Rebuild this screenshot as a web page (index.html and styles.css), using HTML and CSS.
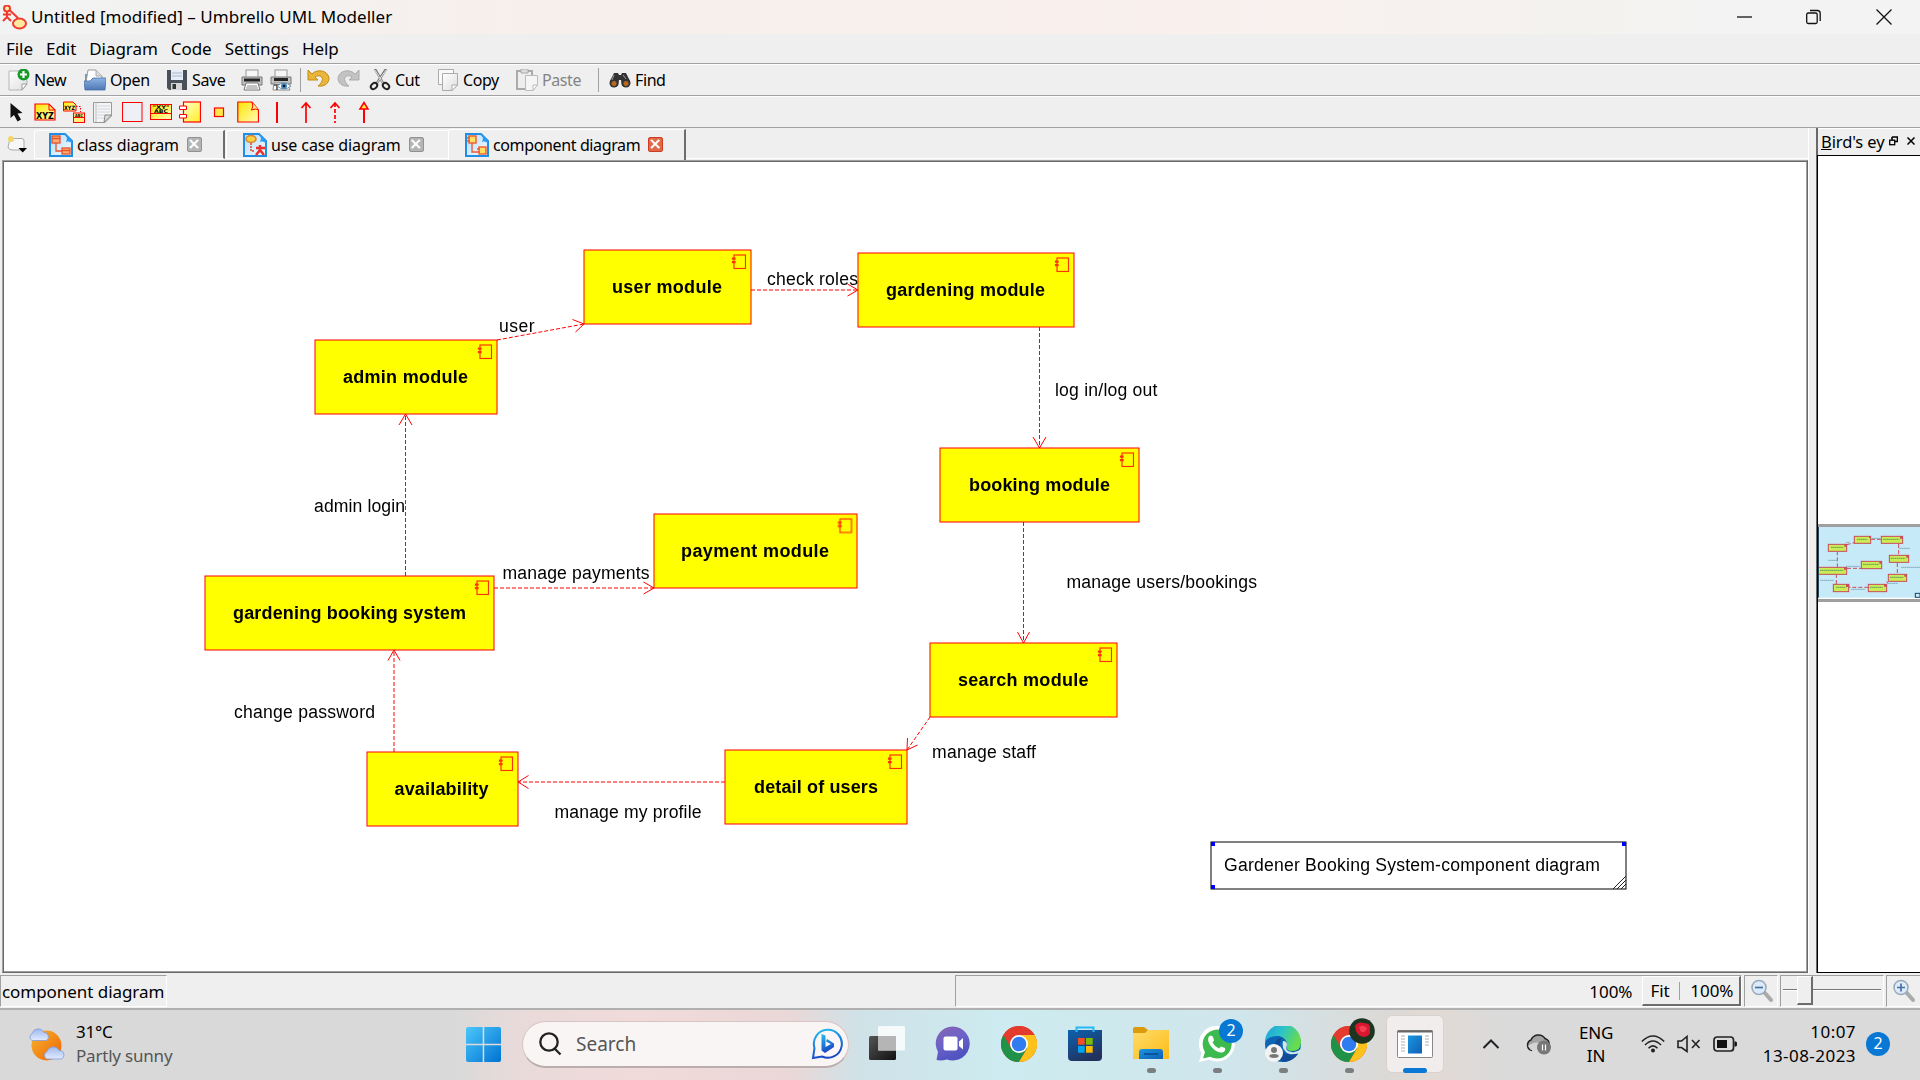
FILE: index.html
```html
<!DOCTYPE html>
<html lang="en">
<head>
<meta charset="utf-8">
<title>Untitled [modified] – Umbrello UML Modeller</title>
<link rel="stylesheet" href="styles.css">
</head>
<body>
<svg class="defs" width="0" height="0">
  <defs>
    <linearGradient id="gy" x1="0" y1="0" x2="1" y2="1"><stop offset="0" stop-color="#ffffd0"/><stop offset="1" stop-color="#ffee20"/></linearGradient>
    <linearGradient id="gyr" x1="0" y1="0" x2="1" y2="1"><stop offset="0" stop-color="#ffe600"/><stop offset="1" stop-color="#fffbb8"/></linearGradient>
    <linearGradient id="gwin" x1="0" y1="0" x2="1" y2="1"><stop offset="0" stop-color="#4cc8fb"/><stop offset="1" stop-color="#0072d2"/></linearGradient>
    <linearGradient id="gsun" x1="0" y1="0" x2="1" y2="1"><stop offset="0" stop-color="#f6b52c"/><stop offset="1" stop-color="#ef6206"/></linearGradient>
    <linearGradient id="gcloud" x1="0" y1="0" x2="0" y2="1"><stop offset="0" stop-color="#9fb8ec"/><stop offset="1" stop-color="#e2ebff"/></linearGradient>
    <linearGradient id="gbing" x1="0" y1="0" x2="0.3" y2="1"><stop offset="0" stop-color="#26c3f0"/><stop offset="1" stop-color="#1747c6"/></linearGradient>
    <linearGradient id="gchat" x1="0" y1="0" x2="0.5" y2="1"><stop offset="0" stop-color="#8a63b0"/><stop offset="0.5" stop-color="#6c63c8"/><stop offset="1" stop-color="#4f52c0"/></linearGradient>
    <linearGradient id="gdark" x1="0" y1="0" x2="1" y2="1"><stop offset="0" stop-color="#555"/><stop offset="1" stop-color="#111"/></linearGradient>
    <linearGradient id="gstore" x1="0" y1="0" x2="0.5" y2="1"><stop offset="0" stop-color="#0c62b0"/><stop offset="1" stop-color="#22325e"/></linearGradient>
    <linearGradient id="gfold" x1="0" y1="0" x2="1" y2="1"><stop offset="0" stop-color="#ffdc6c"/><stop offset="1" stop-color="#fdbb16"/></linearGradient>
    <linearGradient id="gblue" x1="0" y1="0" x2="1" y2="1"><stop offset="0" stop-color="#1a97e0"/><stop offset="1" stop-color="#0f5fb4"/></linearGradient>
    <linearGradient id="gedge" x1="0" y1="0" x2="1" y2="0.4"><stop offset="0" stop-color="#1f9fe0"/><stop offset="0.5" stop-color="#2cc3c9"/><stop offset="1" stop-color="#68dc4c"/></linearGradient>
    <linearGradient id="gopen" x1="0" y1="0" x2="0" y2="1"><stop offset="0" stop-color="#8db4e4"/><stop offset="1" stop-color="#4c78b4"/></linearGradient>
    <linearGradient id="gpap" x1="0" y1="0" x2="1" y2="1"><stop offset="0" stop-color="#fff"/><stop offset="1" stop-color="#dedede"/></linearGradient>
    <linearGradient id="gtab" x1="0" y1="0" x2="1" y2="1"><stop offset="0" stop-color="#b4dcf8"/><stop offset="1" stop-color="#f4fbff"/></linearGradient>
    <symbol id="page" viewBox="0 0 24 24"><path d="M1 1H16L23 8V23H1Z" fill="url(#gtab)" stroke="#1e8ee6" stroke-width="2"/><path d="M15 1C19 4 18 6 17 9C20 8 22 9 23 11V7L17 1Z" fill="#2c9cf0"/></symbol>
    <symbol id="comp" viewBox="0 0 16 16"><rect x="3.500" y="1.500" width="11.500" height="13.500"/><path d="M2 4.500h2.500v1.200H2zM2 8h2.500v1.200H2z"/></symbol>
    <symbol id="chrome" viewBox="0 0 36 36"><circle cx="18" cy="18" r="18" fill="#e33b2e"/><path d="M2.4 9A18 18 0 0 0 18 36L26 22.500L18 18Z" fill="#1f9247"/><path d="M18 9H33.600A18 18 0 0 1 18 36L26 22.500Z" fill="#fcc21b"/><path d="M2.400 9L10.200 22.500L18 18V9H33.600A18 18 0 0 0 2.400 9Z" fill="#e33b2e"/><circle cx="18" cy="18" r="9" fill="#fff"/><circle cx="18" cy="18" r="7.300" fill="#2f7cf0"/></symbol>
  </defs>
</svg>

<header class="titlebar">
  <svg class="app-icon" width="26" height="26" viewBox="0 0 26 26" fill="none" stroke="#f03a2e" stroke-width="2"><circle cx="6" cy="3.500" r="3" fill="#fff3a8"/><path d="M6 7V12L2 16M6 12L10 16M2 9.500H10M9 5.500L17 13"/><ellipse cx="18.500" cy="18.500" rx="6.500" ry="5" fill="#ffe9a0"/></svg>
  <span class="title">Untitled [modified] – Umbrello UML Modeller</span>
  <svg class="win-controls" width="150" height="16" viewBox="0 0 150 16" fill="none" stroke="#111" stroke-width="1.300"><path d="M0 8H15"/><rect x="69.700" y="4" width="10.500" height="10.500" rx="1.500"/><path d="M73 1.500H80.500Q83.200 1.500 83.200 4.500V12"/></svg>
  <svg class="win-close" width="16" height="16" viewBox="0 0 16 16" stroke="#111" stroke-width="1.300"><path d="M.5 .5L15.500 15.500M15.500 .5L.5 15.500"/></svg>
</header>

<nav class="menubar"><span>File</span><span>Edit</span><span>Diagram</span><span>Code</span><span>Settings</span><span>Help</span></nav>

<div class="toolbar main-tools">
  <div class="tool"><svg width="22" height="22" viewBox="0 0 22 22"><path d="M1 2H19V15L14 21H1Z" fill="url(#gpap)" stroke="#b5b5b5"/><path d="M19 15H14V21Z" fill="#fff" stroke="#999"/><circle cx="15.500" cy="5.500" r="6" fill="#169a28"/><path d="M15.500 2V9M12 5.500H19" stroke="#fff" stroke-width="2.200"/></svg>New</div>
  <div class="tool"><svg width="22" height="22" viewBox="0 0 22 22"><path d="M1 5H7V12H1Z" fill="#6a96cc"/><path d="M4 1H12L18 7V13H2Z" fill="#fff" stroke="#999"/><path d="M12 1V7H18" fill="#ddd" stroke="#aaa"/><path d="M0 12H6L9 9H22L21 21H1Z" fill="url(#gopen)" stroke="#4670a8" stroke-width=".8"/></svg>Open</div>
  <div class="tool"><svg width="22" height="22" viewBox="0 0 22 22"><path d="M1 1H21V21H3L1 19Z" fill="#4a5058"/><rect x="5" y="1" width="12" height="10" fill="#e6edf6"/><path d="M6 4H16M6 7H16" stroke="#a8b8cc"/><rect x="5" y="14" width="11" height="7" fill="#d5d5d5"/><rect x="6.500" y="15" width="3.500" height="5" fill="#333"/></svg>Save</div>
  <div class="tool"><svg width="22" height="22" viewBox="0 0 22 22"><rect x="5" y="1" width="12" height="9" fill="#f6f6f6" stroke="#999"/><path d="M1 8H21V16H1Z" fill="#c2c2c2" stroke="#777"/><path d="M3 11H19" stroke="#222" stroke-width="3"/><path d="M5 14H17L19 21H3Z" fill="#fff" stroke="#777"/><path d="M6 17H16M5 19H17" stroke="#888"/></svg></div>
  <div class="tool"><svg width="22" height="22" viewBox="0 0 22 22"><rect x="5" y="1" width="12" height="9" fill="#f6f6f6" stroke="#999"/><path d="M1 8H21V15H1Z" fill="#c2c2c2" stroke="#777"/><path d="M4 10.500H18" stroke="#222" stroke-width="3"/><path d="M4 14H17L20 21H3Z" fill="#fff" stroke="#888"/><path d="M4 16H10M7 16V21" stroke="#444" stroke-width="1.500"/><path d="M7 17Q14 11 21 17Q14 23 7 17Z" fill="#fff" stroke="#7590a8"/><circle cx="14" cy="17" r="3" fill="#3f88c0"/><circle cx="14" cy="17" r="1.300" fill="#112"/></svg></div>
  <i class="sep"></i>
  <div class="tool"><svg width="24" height="22" viewBox="0 0 24 22"><path d="M1 1V11H11L8 8C12 5 17 8 15 12C14 14 13 16 11 17C18 18 22 14 22 9C21 2 11 -1 5 5Z" fill="#e9b53a" stroke="#c48b12"/></svg></div>
  <div class="tool"><svg width="24" height="22" viewBox="0 0 24 22"><path d="M22 1V11H12L15 8C11 5 6 8 8 12C9 14 10 16 12 17C5 18 1 14 1 9C2 2 12 -1 18 5Z" fill="#c3c3c3" stroke="#ababab"/></svg></div>
  <div class="tool"><svg width="22" height="22" viewBox="0 0 22 22" fill="none"><path d="M6 0L14 14M17 0L8 14" stroke="#777" stroke-width="2.400"/><path d="M6 1L14 14M17 1L8 14" stroke="#eee" stroke-width=".9"/><ellipse cx="5" cy="17" rx="3.500" ry="2.600" transform="rotate(-40 5 17)" stroke="#222" stroke-width="2"/><ellipse cx="17" cy="17" rx="3.500" ry="2.600" transform="rotate(40 17 17)" stroke="#222" stroke-width="2"/></svg>Cut</div>
  <div class="tool"><svg width="22" height="22" viewBox="0 0 22 22"><path d="M1.500 .5H16.500V15.500H1.500Z" fill="#fafafa" stroke="#aaa"/><path d="M5.500 4.500H20.500V16L15 21.500H5.500Z" fill="url(#gpap)" stroke="#aaa"/><path d="M20.500 16H15V21.500Z" fill="#fff" stroke="#aaa"/></svg>Copy</div>
  <div class="tool off"><svg width="22" height="22" viewBox="0 0 22 22"><path d="M1 2H16V20H1Z" fill="#eee" stroke="#aaa" stroke-width="2"/><path d="M5 0H12V4H5Z" fill="#ddd" stroke="#aaa"/><path d="M9.500 6.500H21.500V16L17 21.500H9.500Z" fill="#f5f5f5" stroke="#bbb"/><path d="M21.500 16H17V21.500Z" fill="#fff" stroke="#bbb"/></svg>Paste</div>
  <i class="sep"></i>
  <div class="tool"><svg width="22" height="22" viewBox="0 0 22 22"><path d="M1 12L5 4H9L10 6H12L13 4H17L21 12L19 17H13L12 11H10L9 17H2Z" fill="#333"/><circle cx="5" cy="14" r="4.500" fill="#333"/><circle cx="17" cy="14" r="4.500" fill="#333"/><circle cx="5" cy="14.500" r="2.500" fill="#b8691e"/><circle cx="17" cy="14.500" r="2.500" fill="#b8691e"/><path d="M5 6L3 11M14 6L17 10" stroke="#999"/></svg>Find</div>
</div>

<div class="toolbar uml-tools">
  <svg viewBox="0 0 22 22"><path d="M5.500 2V17L9 14L12.500 20.500L16 18.500L12.500 12.500L17.500 12Z" fill="#111"/></svg>
  <svg viewBox="0 0 22 22"><path d="M1 3H15L21 9V19H1Z" fill="url(#gyr)" stroke="#f00" stroke-width="1.200"/><path d="M15 3V9H21" fill="none" stroke="#f00"/><text x="11" y="17.500" class="mini" font-size="9" textLength="18" lengthAdjust="spacingAndGlyphs">XYZ</text></svg>
  <svg viewBox="0 0 22 22"><path d="M.5 1H10L13 4V10H.5Z" fill="url(#gyr)" stroke="#f00"/><text x="6.500" y="8.500" class="mini" font-size="6" textLength="11" lengthAdjust="spacingAndGlyphs">XYZ</text><path d="M13 5.500H17.500V11" fill="none" stroke="#f00" stroke-dasharray="1.500 1.500"/><rect x="10.500" y="12" width="11" height="9.500" fill="#ffef80" stroke="#f00"/><path d="M10.500 16.500H21.500" stroke="#f00"/><text x="16" y="15.800" class="mini" font-size="4" textLength="8" lengthAdjust="spacingAndGlyphs">ABC</text></svg>
  <svg viewBox="0 0 22 22"><path d="M1.500 1.500H19.500V15L13 21.500H1.500Z" fill="#f5f5f5" stroke="#999"/><path d="M4 1V21" stroke="#bbb"/><path d="M5 5H18M5 8H18M5 11H18M5 14H15M5 17H12" stroke="#cfd8e4"/><path d="M19.500 14L12 21.500L13 14Z" fill="#ddd" stroke="#888"/></svg>
  <svg viewBox="0 0 22 22"><rect x="1.500" y="1.500" width="19.500" height="19" fill="#eff0f6" stroke="#f00"/></svg>
  <svg viewBox="0 0 22 22"><rect x=".5" y="3.500" width="21" height="15" fill="url(#gyr)" stroke="#f00"/><path d="M.5 12.500H21.500" stroke="#f00"/><text x="11" y="7.500" class="mini" font-size="5" textLength="17" lengthAdjust="spacingAndGlyphs">"XY"</text><text x="11" y="11.500" class="mini" font-size="5" textLength="14" lengthAdjust="spacingAndGlyphs">ABC</text></svg>
  <svg viewBox="0 0 22 22"><rect x="4.500" y="1" width="17" height="20" fill="url(#gy)" stroke="#f00" stroke-width="1.200"/><path d="M.5 5H7.500V8.500H.5ZM.5 13.500H7.500V17H.5Z" fill="#fff" stroke="#f00"/></svg>
  <svg viewBox="0 0 22 22"><rect x="6.500" y="7" width="9" height="8.500" fill="#ffe94a" stroke="#f00" stroke-width="1.200"/></svg>
  <svg viewBox="0 0 22 22"><path d="M.8 1H15L21.500 9V21H.8Z" fill="url(#gyr)" stroke="#f00" stroke-width="1.200"/><path d="M15 1Q17 5 14.500 9Q19 7 21.500 9" fill="#fff17a" stroke="#f00"/></svg>
  <svg viewBox="0 0 22 22"><path d="M11 1V22" stroke="#f00" stroke-width="2"/></svg>
  <svg viewBox="0 0 22 22" fill="none" stroke="#f00" stroke-width="1.700"><path d="M11 2V22M6.500 7L11 2L15.500 7"/></svg>
  <svg viewBox="0 0 22 22" fill="none" stroke="#f00" stroke-width="1.700"><path d="M6.500 7L11 2L15.500 7"/><path d="M11 2V22" stroke-dasharray="4 2"/></svg>
  <svg viewBox="0 0 22 22" stroke="#f00" stroke-width="1.500"><path d="M11 8V22" stroke-width="2"/><path d="M7 8L11 1.500L15 8Z" fill="#ffef40"/></svg>
</div>

<main class="workspace">
  <section class="diagrams">
    <div class="tabs">
      <svg class="new-tab" width="22" height="22" viewBox="0 0 22 22"><path d="M3 3.500H15Q17 3.500 17 6V15H5Q2 15 1 12Z" fill="#f7f7f7" stroke="#aaa"/><circle cx="4" cy="4" r="3" fill="#f2d668"/><path d="M11.500 13H20L15.700 17.500Z" fill="#000"/></svg>
      <div class="tab"><svg width="24" height="24" viewBox="0 0 24 24"><use href="#page"/><g fill="#ffb070" stroke="#e8502c" stroke-width="1.300"><rect x="3" y="3" width="8" height="7"/><rect x="13" y="15" width="8" height="6"/><path d="M7 10V18H13M3 5.500H11M13 17.500H21" fill="none"/></g></svg><span>class diagram</span><b class="x">×</b></div>
      <div class="tab"><svg width="24" height="24" viewBox="0 0 24 24"><use href="#page"/><ellipse cx="8" cy="6" rx="5" ry="3.500" fill="#f8d040" stroke="#d8802c" stroke-width="1.500"/><path d="M8 10V18H12" fill="none" stroke="#e84030" stroke-width="1.500" stroke-dasharray="2 1"/><path d="M17 12V17L13 22M17 17L21 22M13 15H22" stroke="#e8302c" stroke-width="2.500" fill="none"/></svg><span>use case diagram</span><b class="x">×</b></div>
      <div class="tab current"><svg width="24" height="24" viewBox="0 0 24 24"><use href="#page"/><g fill="#ffe060" stroke="#ee5a34" stroke-width="1.400"><rect x="4" y="3" width="7" height="7"/><rect x="14" y="14" width="7" height="7"/><path d="M7 10V19H12M2 5H5M2 8H5M12 16H15M12 19H15" fill="none"/></g></svg><span>component diagram</span><b class="x red">×</b></div>
      <div class="tabs-rest"></div>
    </div>
    <div class="canvas">
      <svg width="1802" height="808" viewBox="4 162 1802 808">
        <g class="boxes">
          <rect x="584" y="250" width="167" height="74"/><rect x="858" y="253" width="216" height="74"/><rect x="315" y="340" width="182" height="74"/><rect x="940" y="448" width="199" height="74"/><rect x="654" y="514" width="203" height="74"/><rect x="205" y="576" width="289" height="74"/><rect x="930" y="643" width="187" height="74"/><rect x="725" y="750" width="182" height="74"/><rect x="367" y="752" width="151" height="74"/>
        </g>
        <g class="glyphs">
          <use href="#comp" x="730.500" y="253.500" width="16" height="16"/><use href="#comp" x="1053.500" y="256.500" width="16" height="16"/><use href="#comp" x="476.500" y="343.500" width="16" height="16"/><use href="#comp" x="1118.500" y="451.500" width="16" height="16"/><use href="#comp" x="836.500" y="517.500" width="16" height="16"/><use href="#comp" x="473.500" y="579.500" width="16" height="16"/><use href="#comp" x="1096.500" y="646.500" width="16" height="16"/><use href="#comp" x="886.500" y="753.500" width="16" height="16"/><use href="#comp" x="497.500" y="755.500" width="16" height="16"/>
        </g>
        <g class="links">
          <path d="M751 290H858M1039.500 327V448M1023.500 522V643M930 717L907 750M725 782H518M394 752V650M405.500 576V414M497 340L584 324M494 588H654"/>
        </g>
        <g class="heads">
          <path d="M847.500 284L858 290L847.500 296M1033 437L1039.500 448L1046 437M1017.500 632L1023.500 643L1029.500 632M907.500 738L907 750L917.500 745M528.500 775.500L518 782L528.500 788.500M388 660.500L394 650L400 660.500M399 425L405.500 414L412 425M572.500 319.500L584 324L575.500 332M643.500 582L654 588L643.500 594"/>
        </g>
        <g class="names">
          <text x="612" y="293" textLength="110">user module</text><text x="886" y="296" textLength="159">gardening module</text><text x="343" y="383" textLength="125">admin module</text><text x="969" y="491" textLength="141">booking module</text><text x="681" y="557" textLength="148">payment module</text><text x="233" y="619" textLength="233">gardening booking system</text><text x="958" y="686" textLength="130.500">search module</text><text x="754" y="793" textLength="124">detail of users</text><text x="394.500" y="795" textLength="94">availability</text>
        </g>
        <g class="labels">
          <text x="499" y="332" textLength="35.500">user</text><text x="767" y="285" textLength="91">check roles</text><text x="1055" y="396" textLength="102.500">log in/log out</text><text x="1066.500" y="588" textLength="190.500">manage users/bookings</text><text x="932" y="758" textLength="104">manage staff</text><text x="314" y="512" textLength="91">admin login</text><text x="502.500" y="579" textLength="147">manage payments</text><text x="234" y="718" textLength="141">change password</text><text x="554.500" y="818" textLength="147">manage my profile</text>
        </g>
        <rect x="1211" y="842" width="415" height="47" fill="#fff" stroke="#000"/>
        <path d="M1613 889L1626 876M1617 889L1626 880M1621 889L1626 884" stroke="#222" fill="none"/>
        <path d="M1211 842h4v4h-4zM1622 842h4v4h-4zM1211 885h4v4h-4z" fill="#00f"/>
        <g class="labels"><text x="1224" y="871" textLength="376">Gardener Booking System-component diagram</text></g>
      </svg>
    </div>
  </section>
  <aside class="dock">
    <div class="dock-head"><span class="dock-title"><u>B</u>ird's eye</span>
      <svg width="9" height="10" viewBox="0 0 9 10" fill="none" stroke="#000"><path d="M3 1H8.500V5.500H6M3 1V4" stroke-width="1.600"/><rect x=".7" y="4.200" width="5" height="4.500" stroke-width="1.300"/></svg>
      <svg width="8" height="8" viewBox="0 0 8 8" stroke="#000" stroke-width="1.500"><path d="M.5 .5L7.500 7.500M7.500 .5L.5 7.500"/></svg>
    </div>
    <div class="overview">
      <svg width="102" height="78" viewBox="114 72 306 234">
        <rect x="114" y="72" width="306" height="234" fill="#9f9f9f"/><rect x="114" y="81" width="306" height="216" fill="#fff"/><rect x="114" y="81" width="306" height="212" fill="#c7eaf9"/>
        <g fill="#c9ee55" stroke="#cb4a5c" stroke-width="3"><rect x="223" y="109" width="49" height="21"/><rect x="304" y="109" width="64" height="21"/><rect x="145" y="133" width="55" height="21"/><rect x="328" y="166" width="58" height="21"/><rect x="244" y="184" width="61" height="22"/><rect x="114" y="202" width="86" height="21"/><rect x="325" y="223" width="55" height="21"/><rect x="265" y="253" width="55" height="22"/><rect x="160" y="253" width="46" height="22"/></g>
        <g fill="none" stroke="#cb4a5c" stroke-width="3" stroke-dasharray="12 6"><path d="M273 118H304M356 132V166M352 189V223M320 244L324 250M265 262H206M169 252V224M172 202V156M200 134L223 128M201 205H244"/></g>
        <path d="M364 109h4v7h-8v-4zM267 109h5v5h-5zM193 133h7v7h-7zM379 166h7v7h-7zM298 184h7v7h-7zM192 202h8v7h-8zM373 223h7v7h-7zM312 253h8v7h-8zM198 253h10v8h-10z" fill="#cb4a5c"/>
        <g stroke="#6a9a5c" stroke-width="3" stroke-dasharray="5 1"><path d="M231 118H262M309 118H358M153 142H190M332 175H376M249 193H296M120 211H190M330 232H370M270 262H308M168 262H196"/></g>
        <g stroke="#83aab8" stroke-width="3" stroke-dasharray="5 1"><path d="M198 127H208M277 115H301M358 145H390M363 202H420M322 250H354M144 181H174M198 199H240M120 241H162M213 268H256"/></g>
        <path d="M115.500 81V293" stroke="#24495c" stroke-width="3"/><rect x="406" y="280" width="14" height="12" fill="#c7eaf9" stroke="#1c4468" stroke-width="3"/>
      </svg>
    </div>
  </aside>
</main>

<footer class="status">
  <div class="cell name">component diagram</div>
  <div class="cell info"><span>100%</span><div class="zoom-btn"><span>Fit</span><i></i><span>100%</span></div></div>
  <div class="cell ico"><svg width="24" height="24" viewBox="0 0 24 24"><path d="M14 13L21 21" stroke="#aaa" stroke-width="4" stroke-linecap="round"/><circle cx="9" cy="8.500" r="7" fill="#dcebfa" stroke="#9aa9ba" stroke-width="1.500"/><path d="M5 8.500H13" stroke="#47719f" stroke-width="1.700"/></svg></div>
  <div class="cell slider"><i class="groove"></i><i class="thumb"></i></div>
  <div class="cell ico last"><svg width="24" height="24" viewBox="0 0 24 24"><path d="M14 13L21 21" stroke="#aaa" stroke-width="4" stroke-linecap="round"/><circle cx="9" cy="8.500" r="7" fill="#dcebfa" stroke="#9aa9ba" stroke-width="1.500"/><path d="M5 8.500H13M9 4.500V12.500" stroke="#47719f" stroke-width="1.700"/></svg></div>
</footer>

<div class="taskbar">
  <div class="weather">
    <svg width="38" height="36" viewBox="0 0 38 36"><circle cx="18.500" cy="18.500" r="15" fill="url(#gsun)"/><path d="M4 13.500A4 4 0 0 1 4 6.500A6.500 6.500 0 0 1 16 5.500A4.200 4.200 0 0 1 18 13.500Z" fill="url(#gcloud)" stroke="#7f9bdc" stroke-width=".8"/><path d="M19 32A4 4 0 0 1 19 24.500A6.500 6.500 0 0 1 31 23.500A4.400 4.400 0 0 1 33 32Z" fill="url(#gcloud)" stroke="#7f9bdc" stroke-width=".8"/></svg>
    <div class="weather-text"><span class="deg">31°C</span><span class="sky">Partly sunny</span></div>
  </div>
  <svg class="start" width="36" height="36" viewBox="0 0 36 36"><path d="M2 0H16.700V16.700H0V2Q0 0 2 0ZM18.200 0H33Q35 0 35 2V16.700H18.200ZM0 18.200H16.700V35H2Q0 35 0 33ZM18.200 18.200H35V33Q35 35 33 35H18.200Z" fill="url(#gwin)"/></svg>
  <div class="search">
    <svg width="24" height="24" viewBox="0 0 24 24" fill="none" stroke="#222" stroke-width="2.300"><circle cx="11" cy="10" r="8.700"/><path d="M16.500 16.500L22.500 22.500"/></svg>
    <span>Search</span>
    <svg class="bing" width="32" height="32" viewBox="0 0 32 32"><path d="M2 30L3.500 20A14 14 0 1 1 11 28.500Z" fill="#fbf7f8" stroke="url(#gbing)" stroke-width="2"/><path d="M10.500 6L14.500 7.500V19L20 16L15 13.500L16 11L23 15.500V19L14 25L10.500 22.500Z" fill="url(#gbing)"/></svg>
  </div>
  <div class="apps">
    <div class="app"><svg viewBox="0 0 36 36"><rect x="0" y="10" width="27" height="24" rx="1.500" fill="url(#gdark)"/><rect x="9" y="0" width="27" height="24.500" rx="1.500" fill="#fff" opacity=".8"/><rect x="9" y="10" width="18" height="14.500" fill="#b5b5b5"/></svg></div>
    <div class="app"><svg viewBox="0 0 36 36"><path d="M1.500 34L3 26A17 17 0 1 1 12 33.500Q6 35 1.500 34Z" fill="url(#gchat)"/><rect x="8.500" y="10.500" width="14" height="14" rx="2" fill="#fff"/><path d="M24 15.500L28 12V23.500L24 20Z" fill="#fff"/></svg></div>
    <div class="app"><svg viewBox="0 0 36 36"><use href="#chrome"/></svg></div>
    <div class="app"><svg viewBox="0 0 36 36"><path d="M1 4H35V31Q35 35 31 35H5Q1 35 1 31Z" fill="url(#gstore)"/><path d="M9.500 6V1.500H26.500V6" fill="none" stroke="#27b9f4" stroke-width="2"/><path d="M11 12h6.700v6.700H11z" fill="#f25022"/><path d="M19 12h6.700v6.700H19z" fill="#7fba00"/><path d="M11 20h6.700v6.700H11z" fill="#00a4ef"/><path d="M19 20h6.700v6.700H19z" fill="#ffb900"/></svg></div>
    <div class="app open"><svg viewBox="0 0 36 36"><path d="M0 3Q0 1 2 1H11L15 4V10H0Z" fill="#dc9b0b"/><path d="M0 7H12L15 4H36V33H0Z" fill="url(#gfold)"/><path d="M6 33V26Q6 23 9 23H27Q30 23 30 26V33Z" fill="url(#gblue)"/><path d="M11 28H25" stroke="#0b498c" stroke-width="1.500"/></svg></div>
    <div class="app open"><svg viewBox="0 0 36 36"><path d="M0 36L2.500 27A18 18 0 1 1 10 33.800Z" fill="#fff"/><path d="M4 32.500L6 26A14.500 14.500 0 1 1 11 30.700Z" fill="#3dba4e"/><path d="M9.500 11Q12 8 14 11L15 14.500L13.500 16.500Q15.500 20.500 20 22.500L22 20.500L26 22Q27 25 23.500 26.500Q18 27 13 21.500Q8 16 9.500 11Z" fill="#fff"/></svg><span class="badge">2</span></div>
    <div class="app open"><svg viewBox="0 0 36 36"><circle cx="18" cy="18" r="18" fill="#0d63b4"/><path d="M0 16A18 18 0 0 1 36 16Q36 25 27 25Q20 25 22 19Q22 12 14 10Q5 9 0 16Z" fill="url(#gedge)"/><path d="M22 19Q19 25 27 26Q31 27 36 23L35 27Q29 30 22 27Q16 22 18 15Q22 15 22 19Z" fill="#d0e6ec"/><path d="M10 20Q10 12 17 12Q13 17 16 24Q20 31 33 27.500Q28 35 19 36Q10 32 10 20Z" fill="#124a96"/><circle cx="9" cy="27" r="9" fill="#f3f3f3"/><circle cx="9" cy="24" r="3" fill="#777"/><path d="M4.500 31V29Q9 27 13.500 29V31Q9 33 4.500 31Z" fill="#777"/></svg></div>
    <div class="app open"><svg viewBox="0 0 36 36"><use href="#chrome"/></svg><svg class="rose" viewBox="0 0 26 26"><circle cx="13" cy="13" r="12.800" fill="#1c3420"/><path d="M6 8Q9 3 15 5Q22 5 21 12Q22 18 15 19Q7 19 6 8Z" fill="#d8182f"/><path d="M10 9Q14 6 18 10Q17 15 12 14Z" fill="#f53c50"/></svg></div>
    <div class="app active"><svg viewBox="0 0 36 36"><rect x=".5" y="4.500" width="35" height="27" rx="1" fill="#fff" stroke="#888"/><path d="M.5 5.500H35.500" stroke="#666" stroke-width="2"/><rect x="11" y="9.500" width="14" height="18" fill="url(#gblue)"/><path d="M4 10H8M4 13H8M4 16H8M4 19H8M4 22H8M4 25H8M28 10H32M28 13H32M28 16H32M28 19H32" stroke="#ccc" stroke-width="1.600"/></svg></div>
  </div>
  <div class="tray">
    <svg width="18" height="10" viewBox="0 0 18 10" fill="none" stroke="#222" stroke-width="2"><path d="M1.500 9L9 1.500L16.500 9"/></svg>
    <svg class="cloud" width="26" height="22" viewBox="0 0 26 22"><path d="M6 17.500A5.500 5.500 0 0 1 5 7A8 8 0 0 1 19 5.500A6 6 0 0 1 23 12" fill="#a4a4a4" stroke="#222" stroke-width="1.500"/><path d="M2 13Q8 8 13 10L18 13L12 17H5Z" fill="#d4d4d4"/><circle cx="18" cy="14.500" r="7" fill="#777"/><path d="M16.500 11.500V17.500M19.500 11.500V17.500" stroke="#fff" stroke-width="1.200"/></svg>
    <div class="lang"><span>ENG</span><span>IN</span></div>
    <svg class="wifi" width="24" height="18" viewBox="0 0 24 18" fill="none" stroke="#222" stroke-width="1.600"><path d="M.8 6.500Q12 -4.500 23.200 6.500M4 10Q12 2 20 10M7.500 13.200Q12 8.500 16.500 13.200"/><circle cx="12" cy="15.500" r="2" fill="#222" stroke="none"/></svg>
    <svg class="vol" width="24" height="18" viewBox="0 0 24 18" fill="none" stroke="#222" stroke-width="1.600"><path d="M1 6H4.500L10 1.500V16.500L4.500 12.500H1ZM15 5L22.500 13M22.500 5L15 13"/></svg>
    <svg class="bat" width="25" height="16" viewBox="0 0 25 16"><rect x="1" y="1" width="19.500" height="14" rx="3" fill="none" stroke="#222" stroke-width="1.700"/><rect x="4" y="4" width="10" height="8" fill="#111"/><path d="M21.500 5.500H23Q24 5.500 24 8T23 10.500H21.500Z" fill="#111"/></svg>
    <div class="clock"><span>10:07</span><span>13-08-2023</span></div>
    <span class="note-badge">2</span>
  </div>
</div>
</body>
</html>
```

FILE: styles.css
```css
* { box-sizing: border-box; }
body { margin: 0; width: 1920px; height: 1080px; overflow: hidden; display: flex; flex-direction: column; background: #efefef; color: #000; font-family: "Noto Sans", "Open Sans", sans-serif; font-size: 16px; }
svg { display: block; flex: none; }
.defs { position: absolute; }
.titlebar { height: 34px; flex: none; display: flex; align-items: center; background: linear-gradient(90deg, #f1f3f3 0, #f7efec 560px, #f9f0ee 1200px, #f3f2ef 1600px, #f3f3f3 1720px); }
.app-icon { margin: 1px 3px 0 1px; }
.title { font-size: 17px; letter-spacing: .05px; line-height: 34px; margin-left: 1px; }
.win-controls { margin-left: auto; margin-right: -11px; }
.win-close { margin-right: 28px; }
.menubar { height: 30px; flex: none; border-bottom: 1px solid #a0a0a0; display: flex; gap: 13px; padding-left: 6px; line-height: 30px; font-size: 17px; letter-spacing: -.05px; }
.toolbar { height: 32px; flex: none; border-top: 1px solid #fff; border-bottom: 1px solid #a0a0a0; }
.main-tools { display: grid; grid-template-columns: 76px 82px 75px 29px 30px 7px 30px 32px 68px 79px 82px 11px auto; padding-left: 8px; align-items: center; }
.tool { display: flex; align-items: center; gap: 4px; font-size: 16px; letter-spacing: -.4px; line-height: 30px; white-space: nowrap; }
.off { color: #858585; }
.sep { width: 1px; height: 24px; background: #a0a0a0; }
.uml-tools { display: flex; align-items: center; gap: 7px; padding-left: 5px; }
.uml-tools svg { width: 22px; height: 22px; }
.mini { font-family: "DejaVu Sans", sans-serif; font-weight: bold; text-anchor: middle; fill: #000; }

.workspace { height: 846px; flex: none; display: flex; }
.diagrams { width: 1810px; display: flex; flex-direction: column; border-right: 1px solid #fff; }
.tabs { height: 32px; display: flex; align-items: flex-end; padding-bottom: 1px; }
.new-tab { margin: 0 5px 2px 7px; }
.tab { height: 29px; display: flex; align-items: center; font-size: 16px; letter-spacing: -.1px; border: 1px solid #fff; border-right: 2px solid #6d6d6d; border-top-left-radius: 3px; width: 191px; padding-left: 14px; white-space: nowrap; }
.tab + .tab { width: 223px; margin-left: 1px; padding-left: 16px; border-right: 0; }
.tab.current { width: 238px; height: 31px; margin-left: -1px; margin-bottom: -1px; padding: 0 0 1px 16px; border-bottom: 0; border-right: 2px solid #6d6d6d; position: relative; letter-spacing: -.37px; }
.tab span { margin-left: 4px; }
.x { margin-left: 8px; width: 15px; height: 15px; border-radius: 2px; border: 1px solid #929292; background: #b4b4b4; color: #fff; font: bold 16px/12px "DejaVu Sans", sans-serif; text-align: center; letter-spacing: 0; text-indent: -1px; }
.red { background: #dd6b4a; border-color: #cf3c22; }
.tabs-rest { flex: 1; height: 29px; border-bottom: 1px solid #fff; }
.canvas { margin-left: 2px; width: 1806px; height: 813px; background: #fff; border: 1px solid #a0a0a0; border-right-color: #696969; border-bottom-color: #696969; box-shadow: inset 1px 1px #696969, inset -1px -1px #a0a0a0; padding: 1px; }
.boxes { fill: #ff0; stroke: #f00; }
.glyphs { fill: none; stroke: #f00; stroke-width: 1.200; opacity: .8; }
.links { fill: none; stroke: #f00; stroke-dasharray: 4 2; }
.heads { fill: none; stroke: #f00; }
.names, .labels { font-family: "Liberation Sans", Arial, sans-serif; font-size: 17.600px; fill: #000; }
.names { font-weight: bold; font-size: 18px; }
.dock { flex: 1; margin-left: 7px; border-left: 2px solid #696969; display: flex; flex-direction: column; height: 845px; }
.dock-head { height: 27px; flex: none; display: flex; align-items: center; padding: 0 6px 0 3px; border-top: 1px solid #fff; }
.dock-title { width: 64px; margin-right: 4px; overflow: hidden; white-space: nowrap; font-size: 16.500px; letter-spacing: -.1px; line-height: 24px; }
.dock-head svg { margin: -2px 9px 0 0; }
.dock-head svg:last-child { margin-right: 0; }
.overview { flex: 1; margin-left: -1px; border: 1px solid #000; background: #fff; padding-top: 368px; }
.overview svg { margin-right: -1px; }

.status { height: 36px; flex: none; display: flex; padding-top: 1px; border-bottom: 2px solid #b0b0b0; font-size: 17px; letter-spacing: -.05px; }
.cell { height: 32px; border: 1px solid #a0a0a0; border-right-color: #fff; border-bottom-color: #fff; display: flex; align-items: center; white-space: nowrap; }
.name { width: 167px; padding-left: 1px; }
.info { margin-left: 788px; width: 790px; justify-content: flex-end; gap: 10px; }
.zoom-btn { width: 99px; height: 30px; border: 1px solid #fff; border-right: 2px solid #6d6d6d; border-bottom: 2px solid #6d6d6d; display: flex; align-items: center; justify-content: space-between; padding: 0 6px 0 7px; }
.zoom-btn i { height: 18px; width: 1px; background: #a0a0a0; }
.ico { width: 34px; margin-left: 2px; padding-left: 5px; }
.slider { width: 104px; margin-left: 2px; position: relative; }
.groove { width: 98px; height: 2px; margin: -3px 0 0 2px; background: #777; border-bottom: 1px solid #fff; }
.thumb { position: absolute; left: 16px; top: 0; width: 16px; height: 29px; background: #efefef; border: 1px solid #fff; border-right: 2px solid #6d6d6d; border-bottom: 2px solid #6d6d6d; }
.last { border-right: 0; }

.taskbar { height: 70px; flex: none; display: flex; align-items: center; background: linear-gradient(90deg, #d9d9d9 0, #d9d9d9 450px, #e9dada 520px, #f1dada 640px, #ead7d7 790px, #cfe2e8 860px, #cdebf0 1000px, #cfe6ec 1240px, #dcd9d6 1390px, #e2dad5 1430px, #dadada 1500px); }
.weather { width: 466px; padding-left: 28px; display: flex; align-items: center; gap: 10px; }
.weather-text { display: flex; flex-direction: column; font-size: 17px; line-height: 24px; letter-spacing: -.2px; margin-top: -3px; }
.sky { color: #555; }
.start { margin-right: 20px; }
.search { width: 327px; height: 47px; margin-top: -1px; border-radius: 24px; background: #faf5f5; border: 1px solid #d9c4c4; border-bottom: 2px solid #bcadad; display: flex; align-items: center; padding: 0 5px 0 15px; font-size: 19px; color: #555; }
.search span { margin-left: 14px; }
.bing { margin-left: auto; }
.apps { display: flex; gap: 10px; margin-left: 10px; }
.app { width: 56px; height: 56px; margin-top: -2px; position: relative; display: flex; align-items: center; justify-content: center; border-radius: 5px; }
.app svg { width: 36px; height: 36px; }
.app.open::after, .app.active::after { content: ""; position: absolute; bottom: -1px; left: 24px; width: 9px; height: 5px; border-radius: 3px; background: #7c7f80; }
.app.active { background: #f0edec; box-shadow: 0 0 0 1px #d8d2d0; }
.app.active::after { left: 16px; width: 24px; background: #0a78d4; }
.badge, .note-badge { width: 24px; height: 24px; border-radius: 12px; background: #0878d4; color: #fff; font-size: 16px; line-height: 23px; text-align: center; }
.badge { position: absolute; left: 30px; top: 3px; }
.app .rose { position: absolute; left: 28px; top: 2px; width: 26px; height: 26px; }
.tray { flex: 1; display: flex; align-items: center; padding-left: 39px; margin-top: -2px; font-size: 17px; line-height: 23px; letter-spacing: -.2px; }
.cloud { margin-left: 26px; }
.lang { margin-left: 26px; width: 36px; display: flex; flex-direction: column; align-items: center; }
.wifi { margin-left: 27px; }
.vol { margin-left: 12px; }
.bat { margin-left: 12px; }
.clock { width: 118px; display: flex; flex-direction: column; align-items: flex-end; line-height: 24px; letter-spacing: .45px; }
.note-badge { margin-left: 10px; letter-spacing: 0; }
```
